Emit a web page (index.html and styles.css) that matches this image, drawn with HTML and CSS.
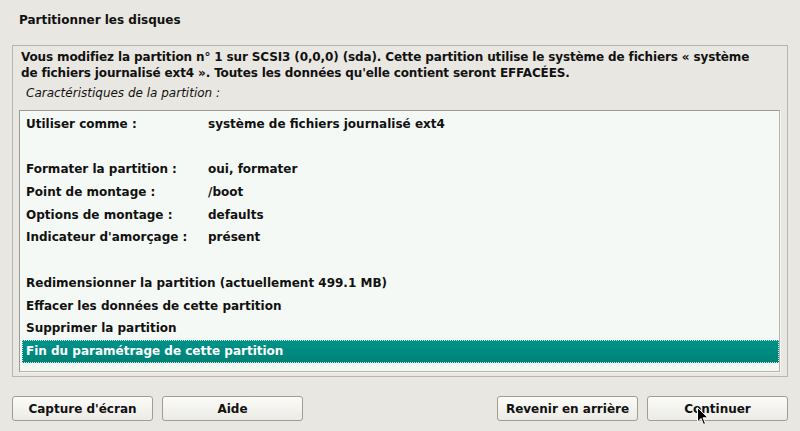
FILE: index.html
```html
<!DOCTYPE html>
<html lang="fr">
<head>
<meta charset="utf-8">
<title>Partitionner les disques</title>
<link rel="stylesheet" href="styles.css">
</head>
<body>
<div class="window">
  <h1 class="title">Partitionner les disques</h1>
  <div class="frame">
    <p class="intro">Vous modifiez la partition n° 1 sur SCSI3 (0,0,0) (sda). Cette partition utilise le système de fichiers « système de fichiers journalisé ext4 ». Toutes les données qu'elle contient seront EFFACÉES.</p>
    <p class="caption">Caractéristiques de la partition :</p>
    <ul class="list">
      <li class="row"><span class="key">Utiliser comme :</span><span class="val">système de fichiers journalisé ext4</span></li>
      <li class="row"></li>
      <li class="row"><span class="key">Formater la partition :</span><span class="val">oui, formater</span></li>
      <li class="row"><span class="key">Point de montage :</span><span class="val">/boot</span></li>
      <li class="row"><span class="key">Options de montage :</span><span class="val">defaults</span></li>
      <li class="row"><span class="key">Indicateur d'amorçage :</span><span class="val">présent</span></li>
      <li class="row"></li>
      <li class="row">Redimensionner la partition (actuellement 499.1 MB)</li>
      <li class="row">Effacer les données de cette partition</li>
      <li class="row">Supprimer la partition</li>
      <li class="row selected">Fin du paramétrage de cette partition</li>
    </ul>
  </div>
  <div class="buttons">
    <div class="group">
      <button class="btn">Capture d'écran</button>
      <button class="btn">Aide</button>
    </div>
    <div class="group">
      <button class="btn">Revenir en arrière</button>
      <button class="btn">Continuer</button>
    </div>
  </div>
  <svg class="cursor" width="12" height="19" viewBox="0 0 12 19"><path d="M0.5 0.5 L0.5 15 L4 11.5 L6.5 17.5 L8.5 16.5 L6 10.8 L11 10.8 Z" fill="#000" stroke="#fff" stroke-width="1"/></svg>
</div>
</body>
</html>
```
FILE: styles.css
```css
html, body {
  margin: 0;
  padding: 0;
  background: #e9e7e1;
}
.window {
  position: relative;
  width: 800px;
  height: 431px;
  font-family: "DejaVu Sans", sans-serif;
  font-size: 12px;
  color: #111;
  box-sizing: border-box;
  padding: 0 12px 0 12px;
}
.title {
  margin: 0;
  padding: 11px 0 0 7px;
  height: 45px;
  box-sizing: border-box;
  font-size: 12px;
  font-weight: bold;
  line-height: 18px;
}
.frame {
  height: 332px;
  border: 1px solid #b9b5ab;
  box-sizing: border-box;
  padding: 3px 7px 0 6px;
}
.intro {
  margin: 0 0 0 2px;
  max-width: 742px;
  font-weight: bold;
  line-height: 16px;
  letter-spacing: -0.13px;
}
.caption {
  margin: 4px 0 0 7px;
  font-style: italic;
  line-height: 17px;
  height: 25px;
}
.list {
  list-style: none;
  margin: 0;
  padding: 2px 0 0 2px;
  height: 262px;
  box-sizing: border-box;
  background: #f5f9f5;
  border: 1px solid #b7b3a9;
  border-top-color: #9e9a91;
  border-left-color: #9e9a91;
  box-shadow: 1px 1px 0 #f5f4f0;
}
.row {
  display: flex;
  height: 22.7px;
  line-height: 22px;
  padding-left: 4px;
  font-weight: bold;
  white-space: nowrap;
}
.key {
  width: 182px;
}
.selected {
  background: linear-gradient(#00938a, #008275);
  color: #fff;
  outline: 1px dotted #c8e8e0;
  outline-offset: -1px;
}
.buttons {
  display: flex;
  justify-content: space-between;
  margin-top: 19px;
}
.group {
  display: flex;
  gap: 9px;
}
.btn {
  width: 141px;
  height: 25px;
  font-family: "DejaVu Sans", sans-serif;
  font-size: 12px;
  font-weight: bold;
  color: #111;
  background: linear-gradient(#fbfbf9, #ecebe5);
  border: 1px solid #a29d90;
  border-radius: 3px;
  padding: 0;
}
.cursor {
  position: absolute;
  left: 697px;
  top: 407px;
}
```
